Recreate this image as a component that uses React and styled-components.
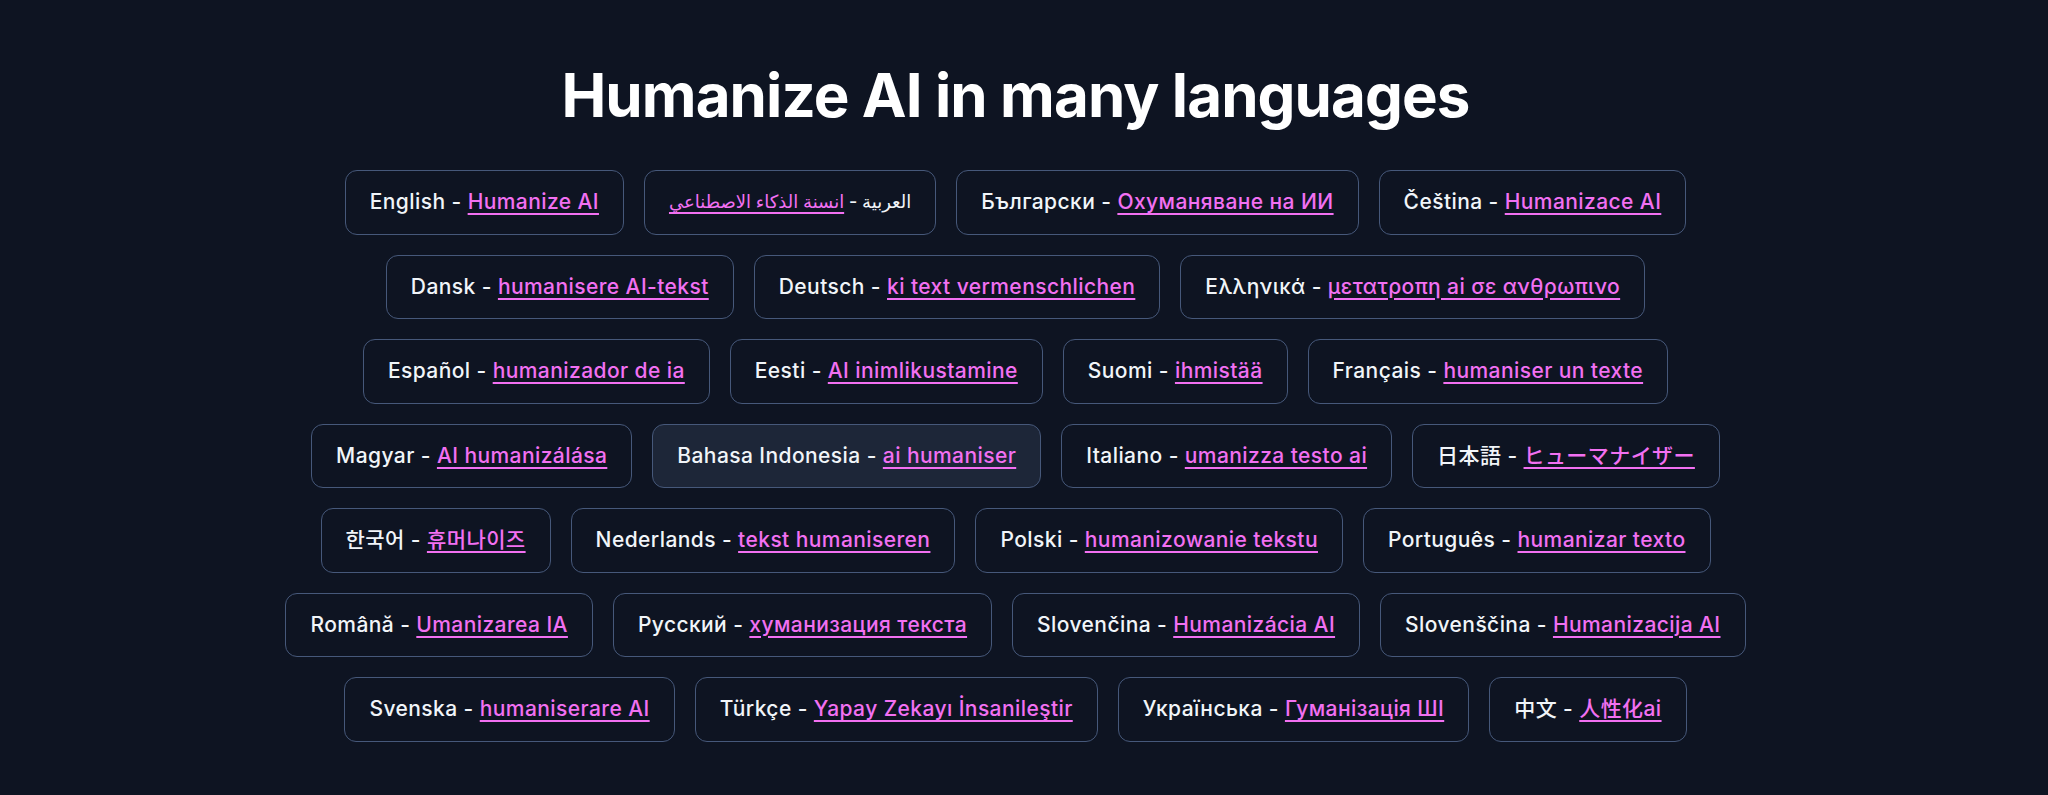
import styled, { createGlobalStyle } from 'styled-components';

const GlobalStyle = createGlobalStyle`
  html, body {
    margin: 0;
    padding: 0;
    background: #0e1422;
  }
  body {
    font-family: Inter, "Noto Sans", "DejaVu Sans", "Noto Sans CJK JP", sans-serif;
    -webkit-font-smoothing: antialiased;
  }
`;

const Page = styled.main`
  width: 100%;
  min-height: 795px;
  background: #0e1422;
  padding: 65px 17px 40px 0;
  box-sizing: border-box;
`;

const Title = styled.h1`
  margin: 0 0 45px 0;
  text-align: center;
  color: #ffffff;
  font-size: 60px;
  line-height: 60px;
  font-weight: 700;
  letter-spacing: -0.015em;
`;

const LangList = styled.ul`
  list-style: none;
  margin: 0 auto;
  padding: 0;
  max-width: 1536px;
  display: flex;
  flex-wrap: wrap;
  justify-content: center;
  gap: 20px 20px;
`;

const LangItem = styled.li`
  border: 1px solid #46587a;
  border-radius: 12px;
  padding: 16.25px 24px;
  font-size: ${(p) => (p.$rtl ? '18px' : '21px')};
  line-height: 30px;
  font-weight: 500;
  letter-spacing: ${(p) => (p.$rtl ? '0' : '0.02em')};
  color: #f1f5f9;
  background: ${(p) => (p.$active ? '#1d2638' : 'transparent')};
  font-family: ${(p) => p.$font || 'inherit'};
  white-space: nowrap;
`;

const LangLink = styled.a`
  color: #f270f2;
  text-decoration: underline;
  text-underline-offset: 4px;
  text-decoration-thickness: 2px;
`;

const cjk = {
  ja: 'Inter, "Noto Sans CJK JP", sans-serif',
  ko: 'Inter, "Noto Sans CJK KR", sans-serif',
  zh: 'Inter, "Noto Sans CJK SC", sans-serif',
};

const languages = [
  { name: 'English', link: 'Humanize AI' },
  { name: 'العربية', link: 'انسنة الذكاء الاصطناعي', rtl: true },
  { name: 'Български', link: 'Охуманяване на ИИ' },
  { name: 'Čeština', link: 'Humanizace AI' },
  { name: 'Dansk', link: 'humanisere AI-tekst' },
  { name: 'Deutsch', link: 'ki text vermenschlichen' },
  { name: 'Ελληνικά', link: 'μετατροπη ai σε ανθρωπινο' },
  { name: 'Español', link: 'humanizador de ia' },
  { name: 'Eesti', link: 'AI inimlikustamine' },
  { name: 'Suomi', link: 'ihmistää' },
  { name: 'Français', link: 'humaniser un texte' },
  { name: 'Magyar', link: 'AI humanizálása' },
  { name: 'Bahasa Indonesia', link: 'ai humaniser', active: true },
  { name: 'Italiano', link: 'umanizza testo ai' },
  { name: '日本語', link: 'ヒューマナイザー', font: cjk.ja },
  { name: '한국어', link: '휴머나이즈', font: cjk.ko },
  { name: 'Nederlands', link: 'tekst humaniseren' },
  { name: 'Polski', link: 'humanizowanie tekstu' },
  { name: 'Português', link: 'humanizar texto' },
  { name: 'Română', link: 'Umanizarea IA' },
  { name: 'Русский', link: 'хуманизация текста' },
  { name: 'Slovenčina', link: 'Humanizácia AI' },
  { name: 'Slovenščina', link: 'Humanizacija AI' },
  { name: 'Svenska', link: 'humaniserare AI' },
  { name: 'Türkçe', link: 'Yapay Zekayı İnsanileştir' },
  { name: 'Українська', link: 'Гуманізація ШІ' },
  { name: '中文', link: '人性化ai', font: cjk.zh },
];

export default function App() {
  return (
    <Page>
      <GlobalStyle />
      <Title>Humanize AI in many languages</Title>
      <LangList>
        {languages.map((l) => (
          <LangItem key={l.name} $active={l.active} $font={l.font} $rtl={l.rtl}>
            {l.name} - <LangLink href="#">{l.link}</LangLink>
          </LangItem>
        ))}
      </LangList>
    </Page>
  );
}
